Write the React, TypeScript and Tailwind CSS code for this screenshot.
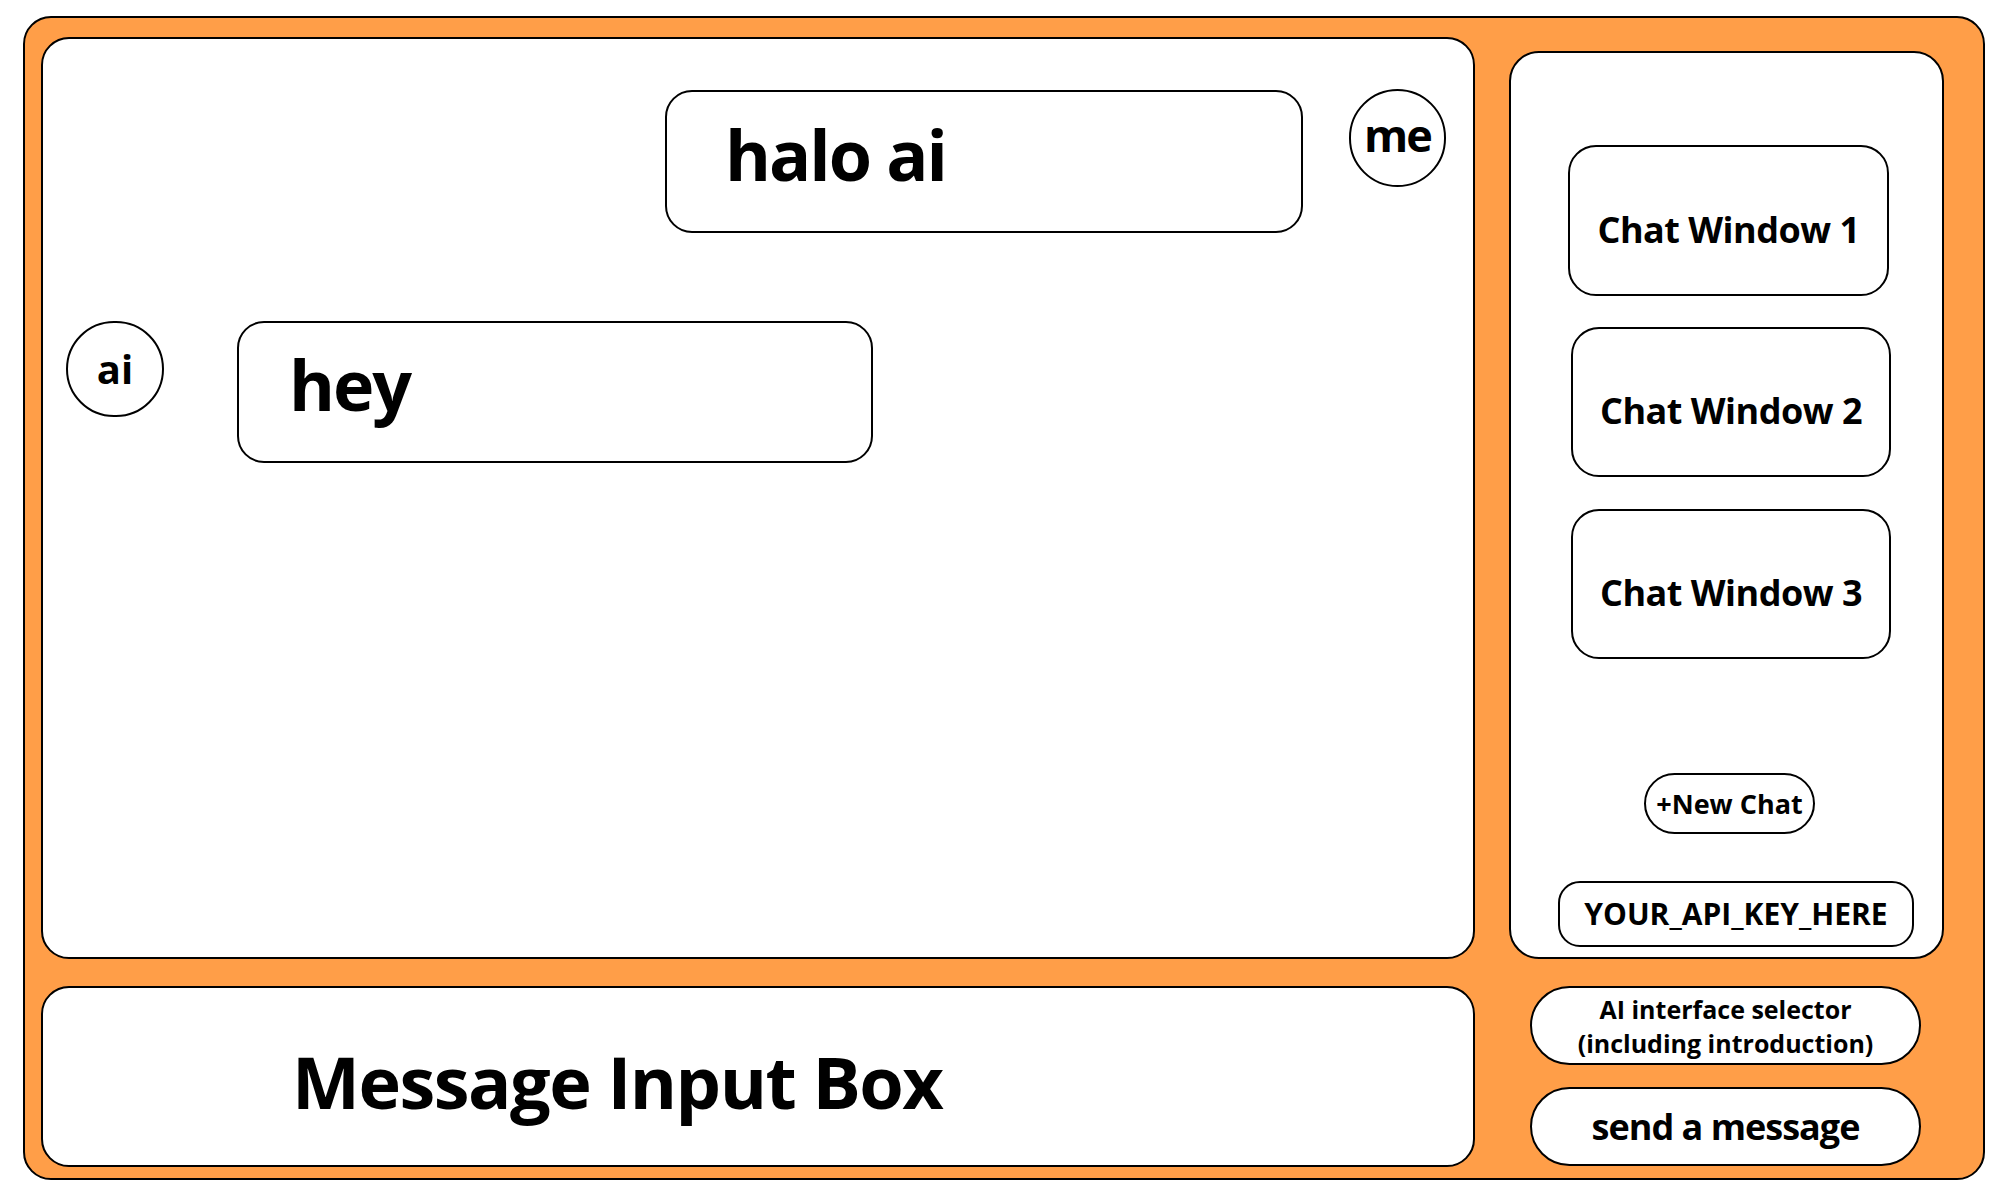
import React from "react";

const font = { fontFamily: '"Open Sans", "Noto Sans", sans-serif' };

export default function App() {
  return (
    <div className="w-[2000px] h-[1200px] bg-white overflow-hidden" style={font}>
      <div className="ml-[23px] mt-[16px] w-[1962px] h-[1164px] border-2 border-black rounded-[28px] bg-[#ff9e48] flex flex-col pl-[16px] pt-[19px] font-bold text-black">
        {/* Row 1 */}
        <div className="flex gap-[34px] h-[922px]">
          {/* chat panel */}
          <div className="w-[1434px] h-full border-2 border-black rounded-[28px] bg-white flex flex-col">
            <div className="flex justify-end items-start gap-[46px] pr-[27px] mt-[51px]">
              <div className="w-[638px] h-[143px] border-2 border-black rounded-[27px] pl-[58px] pt-[27px] text-[70px] leading-none tracking-[-2px]">
                halo ai
              </div>
              <div className="w-[97px] h-[98px] -mt-px border-2 border-black rounded-full flex items-center justify-center pb-[8px] text-[45px] leading-none tracking-[-2px]">
                me
              </div>
            </div>
            <div className="flex items-start gap-[73px] pl-[23px] mt-[88px]">
              <div className="w-[98px] h-[96px] border-2 border-black rounded-full flex items-center justify-center text-[40px] leading-none">
                ai
              </div>
              <div className="w-[636px] h-[142px] border-2 border-black rounded-[27px] pl-[50px] pt-[26px] text-[70px] leading-none tracking-[-2px]">
                hey
              </div>
            </div>
          </div>
          {/* sidebar */}
          <div className="w-[435px] h-[908px] mt-[14px] border-2 border-black rounded-[30px] bg-white flex flex-col">
            <div className="ml-[57px] mt-[92px] w-[321px] h-[151px] border-2 border-black rounded-[28px] flex items-center justify-center pt-[18px] text-[36px] leading-none tracking-[-0.5px]">
              Chat Window 1
            </div>
            <div className="ml-[60px] mt-[31px] w-[320px] h-[150px] border-2 border-black rounded-[28px] flex items-center justify-center pt-[18px] text-[36px] leading-none tracking-[-0.5px]">
              Chat Window 2
            </div>
            <div className="ml-[60px] mt-[32px] w-[320px] h-[150px] border-2 border-black rounded-[28px] flex items-center justify-center pt-[18px] text-[36px] leading-none tracking-[-0.5px]">
              Chat Window 3
            </div>
            <div className="ml-[133px] mt-[114px] w-[171px] h-[61px] border-2 border-black rounded-full flex items-center justify-center text-[27px] leading-none">
              +New Chat
            </div>
            <div className="ml-[47px] mt-[47px] w-[356px] h-[66px] border-2 border-black rounded-[22px] flex items-center justify-center text-[30px] leading-none">
              YOUR_API_KEY_HERE
            </div>
          </div>
        </div>
        {/* Row 2 */}
        <div className="flex gap-[34px] mt-[27px]">
          <div className="w-[1434px] h-[181px] border-2 border-black rounded-[28px] bg-white pl-[249px] pt-[57px] text-[72px] leading-none tracking-[-1.5px]">
            Message Input Box
          </div>
          <div className="w-[435px] flex flex-col pl-[21px] gap-[22px]">
            <div className="w-[391px] h-[79px] border-2 border-black rounded-full bg-white flex flex-col items-center justify-center text-[25px] leading-[34px]">
              <span>AI interface selector</span>
              <span>(including introduction)</span>
            </div>
            <div className="w-[391px] h-[79px] border-2 border-black rounded-full bg-white flex items-center justify-center text-[36px] leading-none tracking-[-1px]">
              send a message
            </div>
          </div>
        </div>
      </div>
    </div>
  );
}
